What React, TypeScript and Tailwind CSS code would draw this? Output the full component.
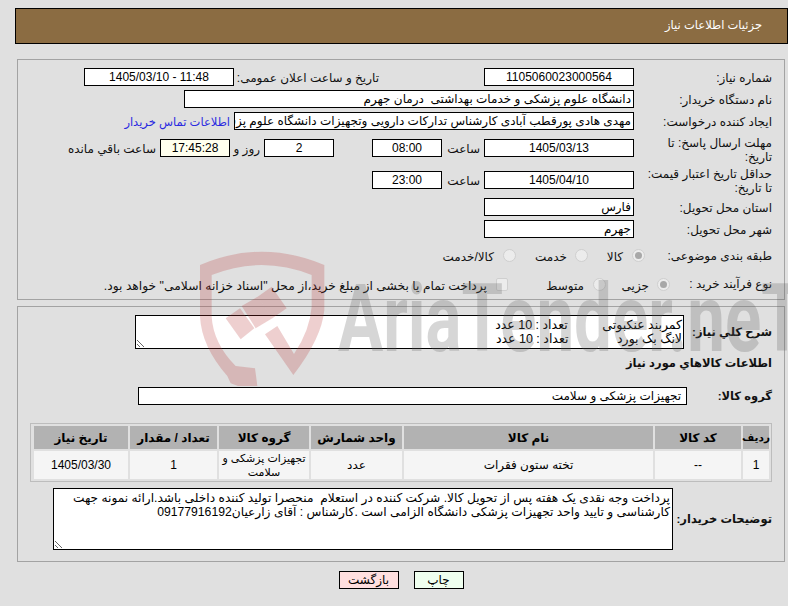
import type { ReactNode } from "react";

const sansStack = "font-['Liberation_Sans','DejaVu_Sans',sans-serif]";

function Field({ className = "", children }: { className?: string; children?: ReactNode }) {
  return (
    <div className={`h-[18px] shrink-0 border border-black pl-[2px] text-[12px] leading-[16px] whitespace-pre overflow-hidden ${className}`}>
      {children}
    </div>
  );
}

function Label({ className = "", children }: { className?: string; children: ReactNode }) {
  return <div className={`shrink-0 leading-[14px] whitespace-nowrap text-[#111] ${className}`}>{children}</div>;
}

function Radio({ checked = false }: { checked?: boolean }) {
  return (
    <span className="flex h-[13px] w-[13px] shrink-0 items-center justify-center rounded-full border border-[#cfcfcf] bg-[#ececec]">
      {checked && <span className="h-[7px] w-[7px] rounded-full bg-[#a8a8a8]" />}
    </span>
  );
}

function Watermark() {
  return (
    <div className="pointer-events-none absolute left-[190px] top-[240px] h-[146px] w-[598px] overflow-hidden">
      {/* shield logo */}
      <svg viewBox="0 0 900 510" width="300" height="170" className="absolute left-0 top-0">
        <g fill="rgba(181,48,48,0.23)">
          <path d="M30 75 Q215 -5 403 75 L403 210 Q395 295 310 405 L225 283 L262 258 L312 342 Q360 270 365 200 L365 105 Q215 45 65 105 L65 230 Q70 310 137 378 L195 385 L205 460 L122 430 L112 408 Q35 320 30 230 Z" />
          <path d="M107 235 L150 205 L193 265 L152 298 Z" />
          <path d="M155 198 L203 170 L247 235 L197 265 Z" />
          <path d="M203 170 L245 140 L290 205 L247 235 Z" />
        </g>
      </svg>
      {/* site name */}
      <span className="absolute left-[148px] top-[21px] origin-left scale-x-[0.715] font-['Roboto',sans-serif] text-[94px] leading-[116px] font-bold whitespace-nowrap text-[rgba(95,95,95,0.26)]" dir="ltr">
        AriaTender.neT
      </span>
    </div>
  );
}

export default function App() {
  return (
    <div dir="rtl" className={`relative h-[606px] w-[788px] overflow-hidden bg-[#e0e0e0] ${sansStack} text-[12px] text-black`}>
      <div className="pt-2">
        {/* Header */}
        <div className="ml-[15px] flex h-[36px] items-center border border-black bg-[#8b6c42] pr-[25px] text-[11.5px] text-white">
          جزئیات اطلاعات نیاز
        </div>

        {/* Main info */}
        <div className="ml-[17px] mr-[3px] mt-[15px] h-[241px] border border-[#a3a3a3] pr-[12px] pt-[8px]">
          <div className="flex items-start">
            <Label className="mt-[3px] w-[138px]">شماره نیاز:</Label>
            <Field className="w-[150px] bg-white pr-[2px] text-center">1105060023000564</Field>
            <Label className="mr-[105px] mt-[3px] w-[145px]">تاریخ و ساعت اعلان عمومی:</Label>
            <Field className="w-[150px] bg-white pr-[2px] text-center">11:48 - 1405/03/10</Field>
          </div>
          <div className="mt-[4px] flex items-start">
            <Label className="mt-[3px] w-[138px]">نام دستگاه خریدار:</Label>
            <Field className="w-[450px] bg-white pr-[2px]">دانشگاه علوم پزشکی و خدمات بهداشتی  درمان جهرم</Field>
          </div>
          <div className="mt-[4px] flex items-start">
            <Label className="mt-[3px] w-[138px]">ایجاد کننده درخواست:</Label>
            <Field className="w-[400px] bg-white pr-[2px]">مهدی هادی پورقطب آبادی کارشناس تدارکات دارویی وتجهیزات دانشگاه علوم پزشکی</Field>
            <a className="mr-[4px] mt-[3px] text-[11.5px] leading-[14px] text-[#2a2ae0]">اطلاعات تماس خریدار</a>
          </div>
          <div className="mt-[9px] flex h-[18px] items-start">
            <Label className="-mt-[3px] w-[138px]">
              مهلت ارسال پاسخ: تا
              <br />
              تاریخ:
            </Label>
            <Field className="w-[150px] bg-white pr-[2px] text-center">1405/03/13</Field>
            <Label className="mr-[4px] mt-[3px] w-[34px]">ساعت</Label>
            <Field className="mr-[4px] w-[70px] bg-white pr-[2px] text-center">08:00</Field>
            <Field className="mr-[38px] w-[70px] bg-white pr-[2px] text-center">2</Field>
            <Label className="mr-[4px] mt-[3px] w-[22px]">روز و</Label>
            <Field className="mr-[8px] w-[70px] bg-[#ffffee] pr-[2px] text-center">17:45:28</Field>
            <Label className="mr-[4px] mt-[3px]">ساعت باقي مانده</Label>
          </div>
          <div className="mt-[14px] flex h-[18px] items-start">
            <Label className="-mt-[4px] w-[138px]">
              حداقل تاریخ اعتبار قیمت:
              <br />
              تا تاریخ:
            </Label>
            <Field className="w-[150px] bg-white pr-[2px] text-center">1405/04/10</Field>
            <Label className="mr-[4px] mt-[3px] w-[34px]">ساعت</Label>
            <Field className="mr-[4px] w-[70px] bg-white pr-[2px] text-center">23:00</Field>
          </div>
          <div className="mt-[9px] flex items-start">
            <Label className="mt-[3px] w-[138px]">استان محل تحویل:</Label>
            <Field className="w-[150px] bg-white pr-[2px]">فارس</Field>
          </div>
          <div className="mt-[4px] flex items-start">
            <Label className="mt-[3px] w-[138px]">شهر محل تحویل:</Label>
            <Field className="w-[150px] bg-white pr-[2px]">جهرم</Field>
          </div>
          <div className="mt-[8px] flex items-center">
            <Label className="mt-[2px] w-[127px]">طبقه بندی موضوعی:</Label>
            <Radio checked />
            <Label className="mr-[9px] mt-[4px] w-[16px]">کالا</Label>
            <span className="w-[19px]" />
            <Radio />
            <Label className="mr-[8px] mt-[4px] w-[32px]">خدمت</Label>
            <span className="w-[19px]" />
            <Radio />
            <Label className="mr-[9px] mt-[4px]">کالا/خدمت</Label>
          </div>
          <div className="mt-[11px] flex items-center">
            <Label className="w-[102px]">نوع فرآیند خرید :</Label>
            <Radio checked />
            <Label className="mr-[8px] mt-[4px] w-[28px]">جزیی</Label>
            <span className="w-[15px]" />
            <Radio />
            <Label className="mr-[9px] mt-[4px] w-[36px]">متوسط</Label>
            <span className="w-[40px]" />
            <span className="h-[13px] w-[12px] shrink-0 rounded-[2px] border border-[#cfcfcf] bg-[#ececec]" />
            <Label className="mr-[9px] mt-[4px] text-[12.3px]">پرداخت تمام یا بخشی از مبلغ خرید،از محل "اسناد خزانه اسلامی" خواهد بود.</Label>
          </div>
        </div>

        {/* Items */}
        <div className="ml-[17px] mr-[3px] mt-[6px] h-[256px] border border-[#a3a3a3] pl-[12px] pr-[12px] pt-[8px]">
          <div className="flex items-center">
            <Label className="w-[88px] text-[11.5px] font-bold">شرح کلي نياز:</Label>
            <textarea
              readOnly
              className="h-[34px] w-[549px] border border-black bg-white px-[1px] pt-[2px] text-[12.5px] leading-[14px] whitespace-pre outline-none"
              value={"کمربند عنکبوتی          تعداد : 10 عدد\nلانگ بک بورد              تعداد : 10 عدد"}
            />
          </div>
          <div className="mt-[7px] text-[11.5px] leading-[14px] font-bold text-[#111]">اطلاعات کالاهاي مورد نياز</div>
          <div className="mt-[17px] flex items-center">
            <Label className="w-[85px] text-[11.5px] font-bold">گروه کالا:</Label>
            <Field className="w-[549px] bg-white pr-[5px] text-[12.3px]">تجهیزات پزشکی و سلامت</Field>
          </div>

          <div className="mt-[18px] grid grid-cols-[26px_86px_249px_91px_90px_87px_94px] gap-[2px] border border-[#bdbdbd] p-[2px] text-center">
            <div className="flex h-[23px] items-center justify-center bg-[#b2b2b2] text-[10.5px] font-bold whitespace-nowrap">ردیف</div>
            {["کد کالا", "نام کالا", "واحد شمارش", "گروه کالا", "تعداد / مقدار", "تاریخ نیاز"].map((h) => (
              <div key={h} className="flex h-[23px] items-center justify-center bg-[#b2b2b2] font-bold whitespace-nowrap">
                {h}
              </div>
            ))}
            <div className="flex h-[28px] items-center justify-center bg-[#f5f5f5]">1</div>
            <div className="flex h-[28px] items-center justify-center bg-[#f5f5f5]">--</div>
            <div className="flex h-[28px] items-center justify-center bg-[#f5f5f5]">تخته ستون فقرات</div>
            <div className="flex h-[28px] items-center justify-center bg-[#f5f5f5]">عدد</div>
            <div className="flex h-[28px] items-center justify-center bg-[#f5f5f5] text-[11px] leading-[14px] whitespace-pre-line">
              {"تجهیزات پزشکی و\nسلامت"}
            </div>
            <div className="flex h-[28px] items-center justify-center bg-[#f5f5f5]">1</div>
            <div className="flex h-[28px] items-center justify-center bg-[#f5f5f5]">1405/03/30</div>
          </div>

          <div className="mt-[6px] flex items-center">
            <Label className="w-[99px] text-[11.5px] font-bold">توضیحات خریدار:</Label>
            <textarea
              readOnly
              className="h-[62px] w-[620px] border border-black bg-white px-[2px] pt-[2px] text-[12.2px] leading-[14px] outline-none"
              value="پرداخت وجه نقدی یک هفته پس از تحویل کالا. شرکت کننده در استعلام  منحصرا تولید کننده داخلی باشد.ارائه نمونه جهت کارشناسی و تایید واحد تجهیزات پزشکی دانشگاه الزامی است .کارشناس : آقای زارعیان09177916192"
            />
          </div>
        </div>

        {/* Actions */}
        <div className="ml-[17px] mr-[3px] mt-[9px] flex justify-center gap-[15px]">
          <button className="h-[18px] w-[50px] border border-black bg-[#efffef] leading-[14px]">چاپ</button>
          <button className="h-[18px] w-[60px] border border-black bg-[#ffdfdf] leading-[14px]">بازگشت</button>
        </div>
      </div>

      <Watermark />
    </div>
  );
}
